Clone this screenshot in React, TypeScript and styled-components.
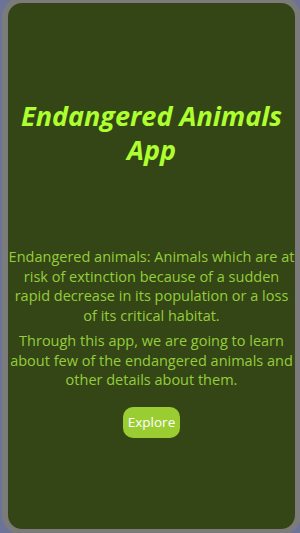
import React from "react";
import styled, { createGlobalStyle } from "styled-components";

const GlobalStyle = createGlobalStyle`
  html, body {
    margin: 0;
    padding: 0;
    height: 100%;
    overflow: hidden;
    background: #6c7399;
  }
`;

const Frame = styled.div`
  box-sizing: border-box;
  width: 299px;
  height: 538px;
  margin: -3px 0 0 2px;
  border: 6px solid #7b7b7b;
  border-radius: 20px;
  background: #354616;
  display: flex;
  flex-direction: column;
  align-items: center;
  font-family: "Open Sans", "Noto Sans", sans-serif;
  text-align: center;
`;

const Title = styled.h1`
  margin: 96px 0 0;
  font-size: 27px;
  line-height: 34px;
  font-weight: 700;
  font-style: italic;
  color: #adff2f;
`;

const Info = styled.div`
  margin-top: 80px;
  display: flex;
  flex-direction: column;
  gap: 6px;
`;

const Para = styled.p`
  margin: 0;
  font-size: 14.5px;
  line-height: 19.5px;
  color: #94cd3c;
`;

const ExploreButton = styled.button`
  margin-top: 17px;
  padding: 0 5px;
  height: 31px;
  border: none;
  border-radius: 10px;
  background: #9acd32;
  color: #ffffff;
  font-family: inherit;
  font-size: 13.5px;
  cursor: pointer;
`;

export default function App() {
  return (
    <>
      <GlobalStyle />
      <Frame>
        <Title>
          Endangered Animals
          <br />
          App
        </Title>
        <Info>
          <Para>
            Endangered animals: Animals which are at risk of extinction because
            of a sudden rapid decrease in its population or a loss of its
            critical habitat.
          </Para>
          <Para>
            Through this app, we are going to learn about few of the endangered
            animals and other details about them.
          </Para>
        </Info>
        <ExploreButton>Explore</ExploreButton>
      </Frame>
    </>
  );
}
